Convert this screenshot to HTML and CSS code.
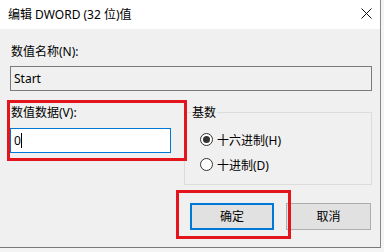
FILE: index.html
```html
<!DOCTYPE html>
<html lang="zh-CN">
<head>
    <meta charset="UTF-8">
    <title>编辑 DWORD (32 位)值</title>
    <link rel="stylesheet" href="styles.css">
</head>
<body>
    <div class="window">
        <div class="titlebar">
            <span class="title">编辑 DWORD (32 位)值</span>
            <svg class="close" width="11" height="11" viewBox="0 0 11 11">
                <path d="M0.5 0.5 L10.5 10.5 M10.5 0.5 L0.5 10.5" stroke="#111" stroke-width="1" fill="none"/>
            </svg>
        </div>

        <div class="content">
            <div class="label first">数值名称(N):</div>
            <div class="field readonly">Start</div>

            <div class="row">
                <div class="left-col">
                    <div class="label">数值数据(V):</div>
                    <div class="field active">0<span class="caret"></span></div>
                </div>
                <fieldset class="group">
                    <legend>基数</legend>
                    <div class="radio first-radio">
                        <span class="dot checked"></span>
                        <span>十六进制(H)</span>
                    </div>
                    <div class="radio">
                        <span class="dot"></span>
                        <span>十进制(D)</span>
                    </div>
                </fieldset>
            </div>

            <div class="buttons">
                <div class="btn default">确定</div>
                <div class="btn">取消</div>
            </div>
        </div>

        <!-- red highlight marks drawn over the dialog -->
        <div class="mark mark-value"></div>
        <div class="mark mark-ok"></div>
    </div>
</body>
</html>
```

FILE: styles.css
```css
* {
    margin: 0;
    padding: 0;
    box-sizing: border-box;
}

html {
    background-color: #f4f4f4;
}

body {
    font-family: "Noto Sans", "Noto Sans CJK SC", sans-serif;
    font-size: 12px;
    color: #000;
    width: 384px;
    height: 252px;
    overflow: hidden;
}

.window {
    position: relative;
    width: 381px;
    height: 248px;
    background-color: #f0f0f0;
    border-right: 1px solid #8a8a8a;
    border-bottom: 1px solid #7a7a7a;
}

.titlebar {
    height: 29px;
    background-color: #fff;
    display: flex;
    align-items: center;
    justify-content: space-between;
    padding: 0 8px 1px 8px;
}

.title {
    line-height: 15px;
}

.close {
    margin-right: 0;
    margin-top: -1px;
}

.content {
    padding: 0 8px 0 10px;
}

.label {
    line-height: 15px;
    height: 15px;
}

.label.first {
    margin-top: 15px;
    margin-left: 1px;
}

.field {
    height: 25px;
    line-height: 15px;
    padding: 4px 3px;
    margin-top: 7px;
}

.field.readonly {
    width: 362px;
    border: 1px solid #7a7a7a;
    background-color: #f0f0f0;
}

.field.active {
    width: 161px;
    margin-top: 8px;
    border: 1px solid #0078d7;
    background-color: #fff;
}

.caret {
    display: inline-block;
    width: 1px;
    height: 15px;
    background-color: #000;
    vertical-align: top;
}

.row {
    display: flex;
    margin-top: 14px;
}

.left-col {
    width: 161px;
}

.left-col .label {
    margin-left: 1px;
}

.group {
    margin-left: 13px;
    width: 188px;
    height: 80px;
    border: 1px solid #dcdcdc;
    padding: 0 0 0 6px;
    min-inline-size: 0;
}

.group legend {
    padding: 0 1px;
    line-height: 15px;
}

.radio {
    display: flex;
    align-items: center;
    height: 15px;
    padding-left: 9px;
    margin-top: 10px;
}

.radio.first-radio {
    margin-top: 12px;
}

.dot {
    width: 13px;
    height: 13px;
    border: 1px solid #333;
    border-radius: 50%;
    background-color: #fff;
    margin-right: 4px;
    display: flex;
    align-items: center;
    justify-content: center;
}

.dot.checked::after {
    content: "";
    width: 7px;
    height: 7px;
    border-radius: 50%;
    background-color: #333;
}

.buttons {
    display: flex;
    justify-content: flex-end;
    gap: 12px;
    margin-top: 18px;
    padding-right: 1px;
}

.btn {
    width: 85px;
    height: 27px;
    line-height: 25px;
    text-align: center;
    background-color: #e1e1e1;
    border: 1px solid #adadad;
}

.btn.default {
    width: 84px;
    border: 2px solid #0078d7;
    line-height: 23px;
}

.mark {
    position: absolute;
    border: 3px solid #e3141c;
}

.mark-value {
    left: 7px;
    top: 100px;
    width: 180px;
    height: 61px;
}

.mark-ok {
    left: 176px;
    top: 190px;
    width: 115px;
    height: 49px;
}
```
